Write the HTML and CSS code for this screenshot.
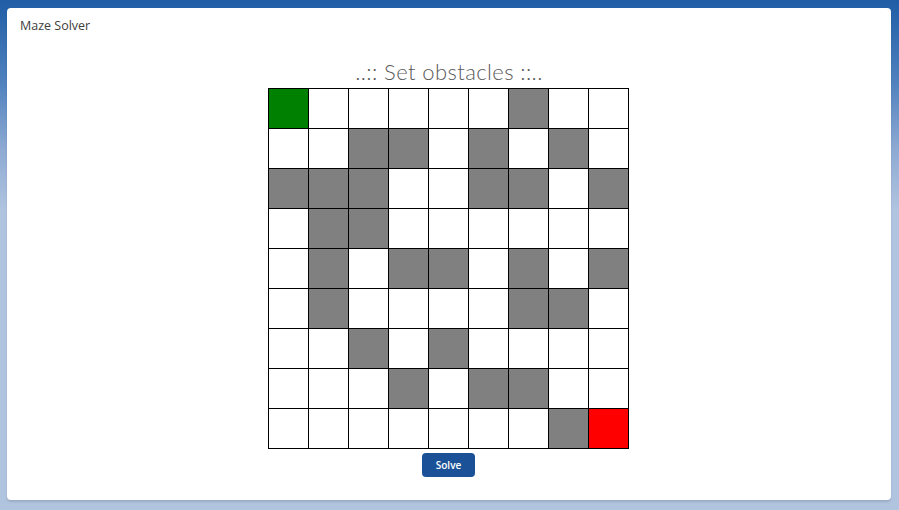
FILE: index.html
```html
<!DOCTYPE html>
<html>
<head>
<meta charset="utf-8">
<link rel="stylesheet" href="styles.css">
</head>
<body>
<div class="card">
  <div class="card-title">Maze Solver</div>
  <div class="content">
    <h2 class="heading">..:: Set obstacles ::..</h2>
    <div class="maze">
      <div class="cell start"></div><div class="cell"></div><div class="cell"></div><div class="cell"></div><div class="cell"></div><div class="cell"></div><div class="cell wall"></div><div class="cell"></div><div class="cell"></div>
      <div class="cell"></div><div class="cell"></div><div class="cell wall"></div><div class="cell wall"></div><div class="cell"></div><div class="cell wall"></div><div class="cell"></div><div class="cell wall"></div><div class="cell"></div>
      <div class="cell wall"></div><div class="cell wall"></div><div class="cell wall"></div><div class="cell"></div><div class="cell"></div><div class="cell wall"></div><div class="cell wall"></div><div class="cell"></div><div class="cell wall"></div>
      <div class="cell"></div><div class="cell wall"></div><div class="cell wall"></div><div class="cell"></div><div class="cell"></div><div class="cell"></div><div class="cell"></div><div class="cell"></div><div class="cell"></div>
      <div class="cell"></div><div class="cell wall"></div><div class="cell"></div><div class="cell wall"></div><div class="cell wall"></div><div class="cell"></div><div class="cell wall"></div><div class="cell"></div><div class="cell wall"></div>
      <div class="cell"></div><div class="cell wall"></div><div class="cell"></div><div class="cell"></div><div class="cell"></div><div class="cell"></div><div class="cell wall"></div><div class="cell wall"></div><div class="cell"></div>
      <div class="cell"></div><div class="cell"></div><div class="cell wall"></div><div class="cell"></div><div class="cell wall"></div><div class="cell"></div><div class="cell"></div><div class="cell"></div><div class="cell"></div>
      <div class="cell"></div><div class="cell"></div><div class="cell"></div><div class="cell wall"></div><div class="cell"></div><div class="cell wall"></div><div class="cell wall"></div><div class="cell"></div><div class="cell"></div>
      <div class="cell"></div><div class="cell"></div><div class="cell"></div><div class="cell"></div><div class="cell"></div><div class="cell"></div><div class="cell"></div><div class="cell wall"></div><div class="cell end"></div>
    </div>
    <button class="solve">Solve</button>
  </div>
</div>
</body>
</html>
```

FILE: styles.css
```css
html, body {
  margin: 0;
  padding: 0;
  height: 100%;
}
body {
  background: linear-gradient(to bottom, #1f5da6 0px, #4e80bd 80px, #8eaad3 150px, #b0c4df 210px, #b0c4df 100%);
  font-family: "Open Sans", "Liberation Sans", sans-serif;
  padding: 8px 8px 10px 7px;
  box-sizing: border-box;
  overflow: hidden;
}
.card {
  background: #fff;
  border-radius: 4px;
  height: 492px;
  box-shadow: 0 2px 2px rgba(0,0,0,0.12);
  box-sizing: border-box;
  padding: 9px 13px;
}
.card-title {
  font-size: 12.5px;
  color: #3e3e3c;
  line-height: 18px;
}
.content {
  display: flex;
  flex-direction: column;
  align-items: center;
}
.heading {
  margin: 24px 0 0 0;
  font-family: "Lato", "Open Sans", sans-serif;
  font-weight: 300;
  font-size: 22px;
  line-height: 26px;
  color: #5a5a5a;
  letter-spacing: 0.4px;
}
.maze {
  display: grid;
  grid-template-columns: repeat(9, 39px);
  grid-auto-rows: 39px;
  gap: 1px;
  padding: 1px;
  background: #000;
  margin-top: 3px;
  margin-left: -1px;
}
.cell { background: #fff; }
.cell.wall { background: #808080; }
.cell.start { background: #008000; }
.cell.end { background: #ff0000; }
.solve {
  margin-top: 4px;
  width: 53px;
  height: 24px;
  background: #1b5297;
  color: #fff;
  border: none;
  border-radius: 4px;
  font-family: "Open Sans", "Liberation Sans", sans-serif;
  font-weight: 600;
  font-size: 10px;
  padding: 0;
  margin-left: -1px;
}
```
